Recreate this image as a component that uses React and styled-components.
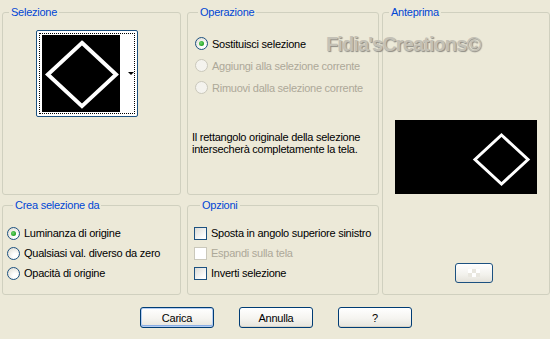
import React from "react"
import styled, { createGlobalStyle } from "styled-components"

const GlobalStyle = createGlobalStyle`
  html, body {
    margin: 0;
    padding: 0;
    background: #ece9d8;
  }
  body {
    font-family: "Liberation Sans", Arial, sans-serif;
    font-size: 11px;
    color: #000;
  }
`

const Dialog = styled.div`
  position: relative;
  width: 550px;
  height: 339px;
  box-sizing: border-box;
  padding: 6px 0 0 2px;
  background: #ece9d8;
  letter-spacing: -0.25px;
`

const Panels = styled.div`
  display: grid;
  grid-template-columns: 179px 6px 192px 3px 168px;
  grid-template-rows: 189px 96px;
  row-gap: 4px;
  grid-template-areas:
    "sel . op . prev"
    "crea . opt . prev";
`

const Group = styled.fieldset`
  grid-area: ${(p) => p.$area};
  margin: 0;
  min-width: 0;
  padding: ${(p) => p.$pad || "0"};
  border: 1px solid #d0d0bf;
  border-radius: 3px;
  display: flex;
  flex-direction: column;
  align-items: flex-start;
`

const Legend = styled.legend`
  margin-left: 6px;
  padding: 0 2px;
  color: #0046d5;
  line-height: 13px;
`

const ThumbBox = styled.div`
  width: 102px;
  height: 87px;
  box-sizing: border-box;
  margin: 11px 0 0 33px;
  padding: 2px;
  border: 1px solid #1c5180;
  border-radius: 2px;
  background: #fff;
`

const FocusRect = styled.div`
  height: 100%;
  box-sizing: border-box;
  display: flex;
  align-items: center;
  padding-left: 2px;
  border: 1px dotted #000;
`

const ThumbImage = styled.svg`
  display: block;
  align-self: flex-start;
`

const DropArrow = styled.span`
  margin-left: 8px;
  width: 0;
  height: 0;
  border-left: 3px solid transparent;
  border-right: 3px solid transparent;
  border-top: 3px solid #000;
`

const OptionList = styled.div`
  display: flex;
  flex-direction: column;
  gap: ${(p) => p.$gap || 0}px;
  margin-left: ${(p) => p.$indent || 0}px;
`

const Row = styled.label`
  display: flex;
  align-items: center;
  gap: 4px;
  height: ${(p) => p.$h || 20}px;
  white-space: nowrap;
  color: ${(p) => (p.$disabled ? "#aca899" : "#000")};
`

const Radio = styled.span`
  position: relative;
  width: 13px;
  height: 13px;
  box-sizing: border-box;
  border-radius: 50%;
  flex: none;
  border: 1px solid ${(p) => (p.$disabled ? "#cac8bb" : "#1c5180")};
  background: ${(p) =>
    p.$disabled
      ? "#f4f3ee"
      : "radial-gradient(circle at 65% 70%, #ffffff 20%, #e6e4dc 75%, #d2d0c4)"};

  &::after {
    content: "";
    display: ${(p) => (p.$checked ? "block" : "none")};
    position: absolute;
    left: 3px;
    top: 3px;
    width: 5px;
    height: 5px;
    border-radius: 50%;
    background: radial-gradient(circle at 40% 40%, #6fd86f, #21a121 70%);
  }
`

const Check = styled.span`
  width: 13px;
  height: 13px;
  box-sizing: border-box;
  flex: none;
  border: 1px solid ${(p) => (p.$disabled ? "#cac8bb" : "#1c5180")};
  background: ${(p) =>
    p.$disabled ? "#fff" : "linear-gradient(135deg, #dcdcd7, #ffffff 85%)"};
`

const Note = styled.p`
  margin: 33px 0 0;
  line-height: 12px;
`

const PreviewImage = styled.svg`
  display: block;
  margin: 101px 0 0 12px;
`

const SmallButton = styled.button`
  width: 38px;
  height: 20px;
  margin: auto 0 11px 72px;
  padding: 0;
  display: flex;
  align-items: center;
  justify-content: center;
  border: 1px solid #1c5180;
  border-radius: 3px;
  background: linear-gradient(#ffffff, #f2f1ec 60%, #e4e2da);
`

const Buttons = styled.div`
  display: flex;
  justify-content: center;
  gap: 25px;
  margin-top: 12px;
`

const Button = styled.button`
  width: 74px;
  height: 21px;
  padding: 0;
  font: inherit;
  letter-spacing: inherit;
  color: #000;
  border: 1px solid #003c74;
  border-radius: 3px;
  background: linear-gradient(#ffffff, #f5f4f0 55%, #e6e4dc);
  box-shadow: ${(p) =>
    p.$default
      ? "inset 0 0 0 1px #b4cdf2, inset 0 -1px 0 1px #89ade4"
      : "inset 0 -1px 0 #d8d4c8"};
`

const Watermark = styled.div`
  position: absolute;
  left: 326px;
  top: 32px;
  font-family: "Liberation Sans", Arial, sans-serif;
  font-weight: bold;
  font-size: 20px;
  line-height: 24px;
  letter-spacing: -0.9px;
  color: #c4c1b6;
  text-shadow: 1px 1px 1px #8e8c85;
  pointer-events: none;
`

const App = () => {
  return (
    <Dialog>
      <GlobalStyle />
      <Panels>
        <Group $area="sel">
          <Legend>Selezione</Legend>
          <ThumbBox>
            <FocusRect>
              <ThumbImage width="80" height="79" viewBox="0 0 80 79">
                <rect width="80" height="79" fill="#000" />
                <polygon
                  points="41,8 76,40.5 41,73 6,40.5"
                  fill="none"
                  stroke="#fff"
                  strokeWidth="4"
                />
              </ThumbImage>
              <DropArrow />
            </FocusRect>
          </ThumbBox>
        </Group>

        <Group $area="op" $pad="0 4px">
          <Legend>Operazione</Legend>
          <OptionList $gap={1} $indent={3} style={{ marginTop: 14 }}>
            <Row $h={21}>
              <Radio $checked />
              Sostituisci selezione
            </Row>
            <Row $h={21} $disabled>
              <Radio $disabled />
              Aggiungi alla selezione corrente
            </Row>
            <Row $h={21} $disabled>
              <Radio $disabled />
              Rimuovi dalla selezione corrente
            </Row>
          </OptionList>
          <Note>
            Il rettangolo originale della selezione
            <br />
            intersecherà completamente la tela.
          </Note>
        </Group>

        <Group $area="prev">
          <Legend>Anteprima</Legend>
          <PreviewImage width="142" height="74" viewBox="0 0 142 74">
            <rect width="142" height="74" fill="#000" />
            <polygon
              points="106.5,15 133,39.5 106.5,64 80,39.5"
              fill="none"
              stroke="#fff"
              strokeWidth="3"
            />
          </PreviewImage>
          <SmallButton>
            <svg width="16" height="10" viewBox="0 0 16 10">
              <rect x="2" y="1" width="4" height="4" fill="#fff" />
              <rect x="6" y="5" width="4" height="4" fill="#fff" />
              <rect x="10" y="1" width="4" height="4" fill="#fff" />
              <rect x="6" y="1" width="4" height="4" fill="#e9e7df" />
              <rect x="2" y="5" width="4" height="4" fill="#e9e7df" />
              <rect x="10" y="5" width="4" height="4" fill="#e9e7df" />
            </svg>
          </SmallButton>
        </Group>

        <Group $area="crea" $pad="11px 4px 0">
          <Legend>Crea selezione da</Legend>
          <OptionList>
            <Row>
              <Radio $checked />
              Luminanza di origine
            </Row>
            <Row>
              <Radio />
              Qualsiasi val. diverso da zero
            </Row>
            <Row>
              <Radio />
              Opacità di origine
            </Row>
          </OptionList>
        </Group>

        <Group $area="opt" $pad="11px 6px 0">
          <Legend>Opzioni</Legend>
          <OptionList>
            <Row>
              <Check />
              Sposta in angolo superiore sinistro
            </Row>
            <Row $disabled>
              <Check $disabled />
              Espandi sulla tela
            </Row>
            <Row>
              <Check />
              Inverti selezione
            </Row>
          </OptionList>
        </Group>
      </Panels>

      <Buttons>
        <Button $default>Carica</Button>
        <Button>Annulla</Button>
        <Button>?</Button>
      </Buttons>

      <Watermark>Fidia'sCreations©</Watermark>
    </Dialog>
  )
}

export default App
